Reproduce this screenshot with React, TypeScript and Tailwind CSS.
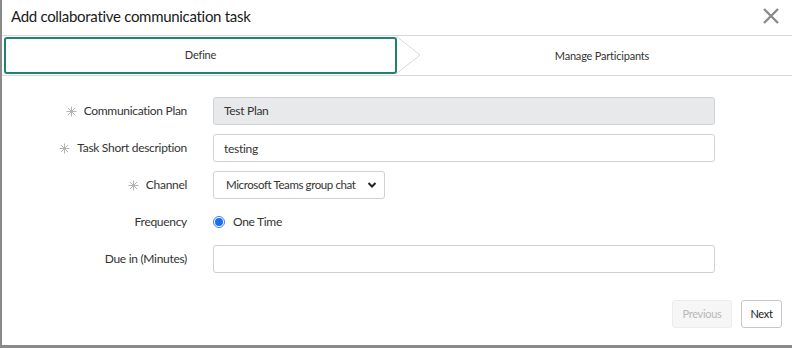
import { useState } from 'react';

const font = { fontFamily: 'Lato, "Open Sans", sans-serif' };

function Req() {
  return (
    <svg width="11" height="11" viewBox="0 0 11 11" className="mr-[7px]">
      <path d="M5.5 0.5 V10.5 M0.5 5.5 H10.5 M1.9 1.9 L9.1 9.1 M9.1 1.9 L1.9 9.1" stroke="#b4b4b4" strokeWidth="1" />
    </svg>
  );
}

export default function App() {
  const [channel, setChannel] = useState('teams');
  return (
    <div className="w-[792px] h-[348px] bg-[#8a8a8a] pl-[2px] pb-[3px]" style={font}>
      <div className="h-full bg-white flex flex-col">
        {/* header */}
        <div className="h-[36px] flex items-center justify-between pl-[9px] pr-[12px] border-b border-[#d8d8d8]">
          <h1 className="text-[15px] tracking-[-0.3px] text-[#1a1a1a] -mt-[2px]">Add collaborative communication task</h1>
          <svg width="18" height="18" viewBox="0 0 18 18" className="mt-[-4px]">
            <path d="M2 2 L16 16 M16 2 L2 16" stroke="#8a8a8a" strokeWidth="2.4" />
          </svg>
        </div>

        {/* wizard tabs */}
        <div className="h-[40px] flex border-b border-[#d8d8d8] pt-[1px] pl-[2px] text-[11px] tracking-[-0.2px] text-[#333]">
          <div className="w-[393px] h-[37px] border-2 border-[#23806f] rounded-[3px] flex items-center justify-center">
            Define
          </div>
          <svg width="26" height="38" viewBox="0 0 26 38" className="-ml-[1px] -mt-[1px]">
            <path d="M0 0 L24 19 L0 38" fill="none" stroke="#d8d8d8" strokeWidth="1" />
          </svg>
          <div className="flex-1 flex items-center justify-center pr-[10px]">
            Manage Participants
          </div>
        </div>

        {/* form */}
        <div className="flex-1 flex flex-col pt-[21px] text-[12px] tracking-[-0.3px] text-[#333]">
          <div className="flex items-center h-[28px]">
            <label className="w-[185px] text-right flex items-center justify-end"><Req />Communication Plan</label>
            <div className="ml-[26px] w-[502px] h-[28px] bg-[#e8e9eb] border border-[#cfd1d4] rounded-[3px] flex items-center px-[10px]">
              Test Plan
            </div>
          </div>
          <div className="flex items-center h-[28px] mt-[9px]">
            <label className="w-[185px] text-right flex items-center justify-end"><Req />Task Short description</label>
            <input
              defaultValue="testing"
              className="ml-[26px] w-[502px] h-[28px] bg-white border border-[#cfd1d4] rounded-[3px] px-[10px] outline-none text-[12px] tracking-[-0.3px] text-[#333]"
            />
          </div>
          <div className="flex items-center h-[28px] mt-[9px]">
            <label className="w-[185px] text-right flex items-center justify-end"><Req />Channel</label>
            <div className="ml-[26px] w-[172px] h-[28px] border border-[#cfd1d4] rounded-[3px] flex items-center justify-between pl-[12px] pr-[7px] relative whitespace-nowrap">
              <span className="text-[11.5px] tracking-[-0.4px]">Microsoft Teams group chat</span>
              <svg width="10" height="8" viewBox="0 0 10 8">
                <path d="M1.5 2 L5 5.5 L8.5 2" fill="none" stroke="#222" strokeWidth="2" />
              </svg>
              <select
                value={channel}
                onChange={(e) => setChannel(e.target.value)}
                className="absolute inset-0 opacity-0"
              >
                <option value="teams">Microsoft Teams group chat</option>
              </select>
            </div>
          </div>
          <div className="flex items-center h-[28px] mt-[9px]">
            <label className="w-[185px] text-right">Frequency</label>
            <div className="ml-[26px] flex items-center">
              <span className="w-[12px] h-[12px] rounded-full border border-[#3b82f6] bg-white flex items-center justify-center">
                <span className="w-[8px] h-[8px] rounded-full bg-[#1a6ff2]" />
              </span>
              <span className="ml-[8px]">One Time</span>
            </div>
          </div>
          <div className="flex items-center h-[28px] mt-[9px]">
            <label className="w-[185px] text-right">Due in (Minutes)</label>
            <input className="ml-[26px] w-[502px] h-[28px] bg-white border border-[#cfd1d4] rounded-[3px] px-[10px] outline-none" />
          </div>

          <div className="mt-[27px] flex justify-end gap-[9px] pr-[10px]">
            <button className="h-[28px] w-[60px] rounded-[3px] bg-[#f6f6f6] border border-[#ececec] text-[#b8b8b8] text-[11px]">
              Previous
            </button>
            <button className="h-[28px] w-[41px] rounded-[3px] bg-white border border-[#c8c8c8] text-[#222] text-[11px]">
              Next
            </button>
          </div>
        </div>
      </div>
    </div>
  );
}
